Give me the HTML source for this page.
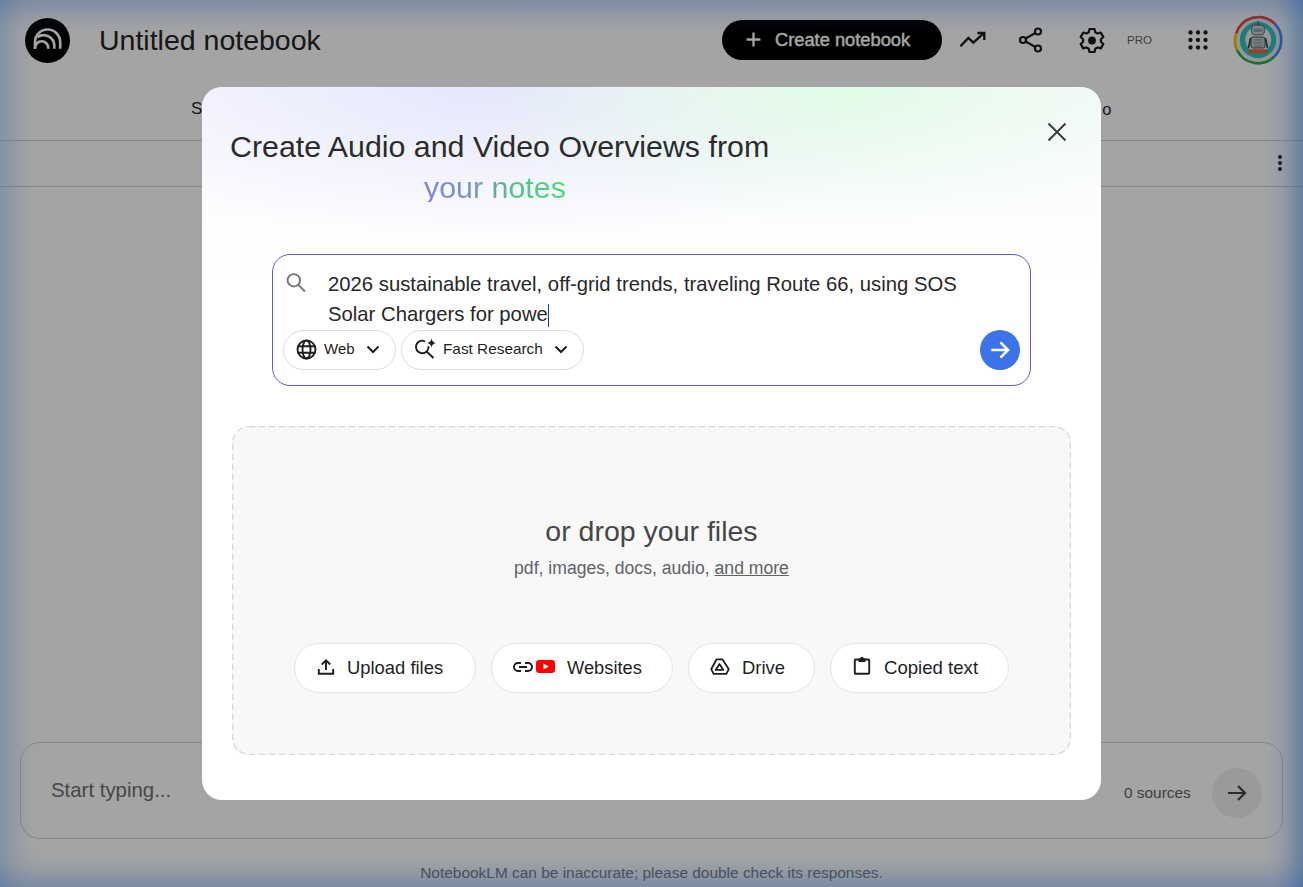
<!DOCTYPE html>
<html><head><meta charset="utf-8">
<style>
*{box-sizing:border-box;margin:0;padding:0}
html,body{width:1303px;height:887px;overflow:hidden;background:#fff;font-family:"Liberation Sans",sans-serif;color:#1f1f1f}
.abs{position:absolute}
.t{position:absolute;white-space:nowrap;line-height:1}
#glow{position:absolute;left:0;top:0;width:1303px;height:887px;
 background:
  linear-gradient(to right, rgba(80,165,255,.3) 0px, rgba(80,165,255,.22) 8px, rgba(80,165,255,.13) 16px, rgba(80,165,255,.06) 24px, rgba(80,165,255,.02) 32px, rgba(80,165,255,0) 40px),
  linear-gradient(to left, rgba(70,140,245,.5) 0px, rgba(70,140,245,.36) 8px, rgba(70,140,245,.2) 16px, rgba(70,140,245,.09) 24px, rgba(70,140,245,.03) 32px, rgba(70,140,245,0) 40px),
  linear-gradient(to bottom, rgba(70,140,245,.32) 0px, rgba(70,140,245,.23) 8px, rgba(70,140,245,.13) 16px, rgba(70,140,245,.05) 24px, rgba(70,140,245,.01) 32px, rgba(70,140,245,0) 38px),
  linear-gradient(to top, rgba(70,140,245,.32) 0px, rgba(70,140,245,.23) 8px, rgba(70,140,245,.13) 16px, rgba(70,140,245,.05) 24px, rgba(70,140,245,.01) 32px, rgba(70,140,245,0) 38px);}
#overlay{position:absolute;left:0;top:0;width:1303px;height:887px;background:rgba(0,0,0,0.356)}
#modal{position:absolute;left:202px;top:87px;width:899px;height:713px;border-radius:20px;background:#fff;overflow:hidden}
#modal .bg{position:absolute;left:0;top:0;width:899px;height:713px;
 background:
  radial-gradient(ellipse 380px 140px at 640px 0px, rgba(226,252,230,1), rgba(226,252,230,0.5) 45%, rgba(226,252,230,0) 100%),
  radial-gradient(ellipse 480px 150px at 300px 0px, rgba(229,230,252,1), rgba(229,230,252,0.5) 45%, rgba(229,230,252,0) 100%),
  linear-gradient(180deg, rgba(240,241,252,0.45) 0px, rgba(255,255,255,0) 190px);}
.chip{position:absolute;border:1px solid #dadce0;border-radius:20px;background:#fff}
.btn{position:absolute;border:1px solid #e3e3e3;border-radius:25px;background:#fff;height:50px;top:643px}
</style></head>
<body>
<!-- header -->
<svg class="abs" style="left:25px;top:18px" width="45" height="45" viewBox="0 0 45 45">
 <circle cx="22.5" cy="22.5" r="22.5" fill="#000"/>
 <g fill="none" stroke="#fff" stroke-width="2.65">
  <path d="M10 30.7 V24.1 A12.6 12.6 0 0 1 35.2 24.1 V30.7"/>
  <path d="M12.5 19.1 A10.7 10.7 0 0 1 29.3 27.9 V30.7"/>
  <path d="M10 30.7 V29.9 A6.65 6.65 0 0 1 23.3 29.9 V30.7"/>
 </g>
</svg>
<div class="t" style="left:99px;top:25.5px;font-size:28.5px;color:#242424">Untitled notebook</div>

<div class="abs" style="left:722px;top:20px;width:220px;height:40px;border-radius:20px;background:#000"></div>
<svg class="abs" style="left:746px;top:32px" width="15" height="15" viewBox="0 0 15 15"><path d="M7.5 0.5V14.5M0.5 7.5H14.5" stroke="#fff" stroke-width="2.3"/></svg>
<div class="t" style="left:775px;top:30.8px;font-size:18.3px;font-weight:400;-webkit-text-stroke:0.45px #fff;color:#fff">Create notebook</div>

<!-- trending -->
<svg class="abs" style="left:958px;top:28px" width="28" height="24" viewBox="0 0 28 24">
 <path d="M2.4 18.3 L10.4 9.9 L15.3 14.6 L25.5 5.3" fill="none" stroke="#1a1a1a" stroke-width="2.3"/>
 <path d="M19.4 5 H26.3 V11.9" fill="none" stroke="#1a1a1a" stroke-width="2.3"/>
</svg>
<!-- share -->
<svg class="abs" style="left:1018px;top:27px" width="26" height="26" viewBox="0 0 26 26">
 <g fill="none" stroke="#1a1a1a" stroke-width="2.2">
  <circle cx="20" cy="4.5" r="3"/><circle cx="5" cy="13" r="3"/><circle cx="20" cy="21.5" r="3"/>
  <path d="M7.6 11.5 L17.4 6 M7.6 14.5 L17.4 20"/>
 </g>
</svg>
<!-- settings -->
<svg class="abs" style="left:1079px;top:27px" width="26" height="26" viewBox="0 0 26 26">
 <path fill="none" stroke="#1a1a1a" stroke-width="2.2" stroke-linejoin="round" d="M10.5 2 H15.5 L16.3 5.2 L18.6 6.5 L21.8 5.6 L24.3 9.9 L21.9 12.2 V14.8 L24.3 17.1 L21.8 21.4 L18.6 20.5 L16.3 21.8 L15.5 25 H10.5 L9.7 21.8 L7.4 20.5 L4.2 21.4 L1.7 17.1 L4.1 14.8 V12.2 L1.7 9.9 L4.2 5.6 L7.4 6.5 L9.7 5.2 Z"/>
 <circle cx="13" cy="13.5" r="3.9" fill="#1a1a1a"/>
</svg>
<div class="t" style="left:1127px;top:34px;font-size:11.6px;color:#5f6368">PRO</div>
<!-- apps -->
<svg class="abs" style="left:1187px;top:29px" width="22" height="22" viewBox="0 0 22 22" fill="#1f1f1f">
 <circle cx="3.5" cy="3.5" r="2.15"/><circle cx="11" cy="3.5" r="2.15"/><circle cx="18.5" cy="3.5" r="2.15"/>
 <circle cx="3.5" cy="11" r="2.15"/><circle cx="11" cy="11" r="2.15"/><circle cx="18.5" cy="11" r="2.15"/>
 <circle cx="3.5" cy="18.5" r="2.15"/><circle cx="11" cy="18.5" r="2.15"/><circle cx="18.5" cy="18.5" r="2.15"/>
</svg>
<!-- avatar -->
<svg class="abs" style="left:1233px;top:15px" width="50" height="50" viewBox="0 0 50 50">
 <g fill="none" stroke-width="2.8">
  <path d="M3.3 18.5 A23.3 23.3 0 0 1 41.5 8.5" stroke="#ea4335"/>
  <path d="M41.5 8.5 A23.3 23.3 0 0 1 41.5 41.3" stroke="#4285f4"/>
  <path d="M41.5 41.3 A23.3 23.3 0 0 1 4 35" stroke="#34a853"/>
  <path d="M4 35 A23.3 23.3 0 0 1 3.3 18.5" stroke="#fbbc04"/>
 </g>
 <circle cx="25" cy="25" r="21.3" fill="#e6e8ea"/>
 <circle cx="25" cy="25" r="18.2" fill="#2bc6b8"/>
 <circle cx="25.3" cy="24.5" r="13" fill="#e8ecee"/>
 <path d="M25 6 V10" stroke="#444" stroke-width="1.2"/>
 <rect x="18.7" y="10.2" width="12.6" height="9.6" rx="3" fill="#c8d0d2" stroke="#5a6264" stroke-width="1"/>
 <rect x="20.5" y="13.5" width="9" height="3.5" rx="1" fill="#8fa4a8"/>
 <rect x="18" y="22" width="14" height="11" rx="2" fill="#b8c4c6" stroke="#4a5254" stroke-width="1"/>
 <path d="M21 25 H29 M21 28 H29 M21 31 H29" stroke="#7a8a8c" stroke-width="0.8"/>
 <path d="M15.5 33 L17.5 23 M34.5 33 L32.5 23" stroke="#3a3a3a" stroke-width="1.6"/>
 <rect x="15.3" y="34.2" width="19" height="4.1" rx="1" fill="#f2603a"/>
</svg>
<!-- tabs -->
<div class="t" style="left:191px;top:100px;font-size:17px;color:#1f1f1f">Sources</div>
<div class="t" style="left:1102.2px;top:100.5px;font-size:16.5px;color:#1f1f1f">o</div>
<div class="abs" style="left:0;top:140px;width:1303px;height:1px;background:#d0d0d0"></div>
<div class="abs" style="left:0;top:186px;width:1303px;height:1px;background:#d0d0d0"></div>
<svg class="abs" style="left:1276px;top:154px" width="8" height="18" viewBox="0 0 8 18" fill="#1f1f1f">
 <circle cx="4" cy="3" r="2"/><circle cx="4" cy="9" r="2"/><circle cx="4" cy="15" r="2"/>
</svg>

<!-- bottom input -->
<div class="abs" style="left:20px;top:742px;width:1263px;height:97px;border:1px solid #d3d3d3;border-radius:20px;background:#fff"></div>
<div class="t" style="left:51px;top:780px;font-size:20.4px;color:#6f6f6f">Start typing...</div>
<div class="t" style="left:1124px;top:785px;font-size:15.4px;color:#5f6368">0 sources</div>
<div class="abs" style="left:1212px;top:768px;width:50px;height:50px;border-radius:25px;background:#f0f0f0"></div>
<svg class="abs" style="left:1226px;top:782px" width="22" height="22" viewBox="0 0 22 22">
 <path d="M2 11 H19 M12 4 L19 11 L12 18" fill="none" stroke="#444746" stroke-width="2.2"/>
</svg>
<div class="t" style="left:0;width:1303px;text-align:center;top:865px;font-size:15.45px;color:#777a7e">NotebookLM can be inaccurate; please double check its responses.</div>

<div id="glow"></div>
<div id="overlay"></div>

<!-- modal -->
<div id="modal">
 <div class="bg"></div>
 <div class="t" style="left:28px;top:45px;font-size:30.35px;color:#2b2b2b">Create Audio and Video Overviews from</div>
 <div class="t" style="left:222px;top:85px;font-size:30.4px;background:linear-gradient(90deg,#7e84e0 0%,#7596cc 30%,#62aaa0 48%,#58bd90 62%,#50cd84 80%,#4adb7c 100%);-webkit-background-clip:text;background-clip:text;color:transparent">your notes</div>
 <svg class="abs" style="left:844px;top:34px" width="22" height="22" viewBox="0 0 22 22"><path d="M2.5 2.5 L19.5 19.5 M19.5 2.5 L2.5 19.5" stroke="#3a3d3b" stroke-width="2"/></svg>
 <!-- search box -->
 <div class="abs" style="left:70px;top:167px;width:759px;height:132px;border:1.3px solid #5763c6;border-radius:18px;background:#fff"></div>
 <svg class="abs" style="left:82px;top:184px" width="24" height="24" viewBox="0 0 24 24"><circle cx="9.8" cy="9.3" r="6.2" fill="none" stroke="#757575" stroke-width="1.9"/><path d="M14.3 13.8 L21 20.5" stroke="#757575" stroke-width="1.9"/></svg>
 <div class="t" style="left:126px;top:187px;font-size:20.3px;color:#282828">2026 sustainable travel, off-grid trends, traveling Route 66, using SOS</div>
 <div class="t" style="left:126px;top:217px;font-size:20.3px;color:#282828">Solar Chargers for powe</div>
 <div class="abs" style="left:346px;top:217px;width:1.3px;height:23px;background:#1a3d8f"></div>
 <div class="chip" style="left:81px;top:243px;width:113px;height:40px"></div>
 <svg class="abs" style="left:94px;top:252px" width="21" height="21" viewBox="0 0 21 21"><g fill="none" stroke="#1f1f1f" stroke-width="1.9"><circle cx="10.5" cy="10.5" r="9"/><ellipse cx="10.5" cy="10.5" rx="4" ry="9"/><path d="M1.5 7.3 H19.5 M1.5 13.7 H19.5"/></g></svg>
 <div class="t" style="left:122px;top:254px;font-size:15px;color:#1f1f1f">Web</div>
 <svg class="abs" style="left:164px;top:258px" width="14" height="9" viewBox="0 0 14 9"><path d="M1.5 1.5 L7 7 L12.5 1.5" fill="none" stroke="#1f1f1f" stroke-width="2"/></svg>
 <div class="chip" style="left:199px;top:243px;width:183px;height:40px"></div>
 <svg class="abs" style="left:212px;top:251px" width="24" height="21" viewBox="0 0 24 21"><g fill="none" stroke="#1f1f1f" stroke-width="1.9"><path d="M14.5 8.2 A6.3 6.3 0 1 1 11 3.3"/><path d="M12 13 L19.5 20"/></g><path d="M17.5 0.5 Q18.2 4.3 22 5 Q18.2 5.7 17.5 9.5 Q16.8 5.7 13 5 Q16.8 4.3 17.5 0.5Z" fill="#1f1f1f"/></svg>
 <div class="t" style="left:241px;top:254px;font-size:15.35px;color:#1f1f1f">Fast Research</div>
 <svg class="abs" style="left:352px;top:258px" width="14" height="9" viewBox="0 0 14 9"><path d="M1.5 1.5 L7 7 L12.5 1.5" fill="none" stroke="#1f1f1f" stroke-width="2"/></svg>
 <div class="abs" style="left:778px;top:243px;width:40px;height:40px;border-radius:20px;background:#3b74e9"></div>
 <svg class="abs" style="left:788px;top:253px" width="20" height="20" viewBox="0 0 20 20"><path d="M1.3 10 H18.1 M10.4 2.4 L18.1 10 L10.4 17.6" fill="none" stroke="#fff" stroke-width="2.5"/></svg>
 <!-- dropzone -->
 <div class="abs" style="left:30px;top:339px;width:839px;height:329px;border-radius:16px;background:#f8f8f8"></div>
 <svg class="abs" style="left:30px;top:339px" width="839" height="329"><rect x="0.7" y="0.7" width="837.6" height="327.6" rx="16" fill="none" stroke="#d8d8e0" stroke-width="1.3" stroke-dasharray="6.5 3.5"/></svg>
 <div class="t" style="left:0;width:899px;text-align:center;top:430px;font-size:28.5px;color:#444746">or drop your files</div>
 <div class="t" style="left:0;width:899px;text-align:center;top:472.5px;font-size:17.6px;color:#5f6368">pdf, images, docs, audio, <span style="text-decoration:underline">and more</span></div>
 <div class="btn" style="left:92px;width:182px;top:556px"></div>
 <svg class="abs" style="left:115px;top:571px" width="18" height="18" viewBox="0 0 18 18"><g fill="none" stroke="#1f1f1f" stroke-width="1.9"><path d="M9 12 V2.5 M4.8 6.5 L9 2.3 L13.2 6.5"/><path d="M1.8 11 V15.8 H16.2 V11"/></g></svg>
 <div class="t" style="left:145px;top:572px;font-size:18.4px;color:#1f1f1f">Upload files</div>
 <div class="btn" style="left:289px;width:182px;top:556px"></div>
 <svg class="abs" style="left:311px;top:574px" width="20" height="12" viewBox="0 0 20 12"><g fill="none" stroke="#1f1f1f" stroke-width="1.9"><path d="M8 2 H5 A4 4 0 0 0 5 10 H8 M12 2 H15 A4 4 0 0 1 15 10 H12 M6 6 H14"/></g></svg>
 <svg class="abs" style="left:334px;top:573px" width="19" height="13" viewBox="0 0 19 13"><rect x="0" y="0" width="19" height="13" rx="3.2" fill="#ff0000"/><path d="M7.5 3.6 L12.8 6.5 L7.5 9.4Z" fill="#fff"/></svg>
 <div class="t" style="left:365px;top:572px;font-size:18.3px;color:#1f1f1f">Websites</div>
 <div class="btn" style="left:486px;width:127px;top:556px"></div>
 <svg class="abs" style="left:507px;top:570px" width="22" height="20" viewBox="0 0 22 20"><g fill="none" stroke="#1f1f1f" stroke-width="1.8" stroke-linejoin="round"><path d="M7.6 2.3 H13.4 L19.8 12.2 L17.4 16.9 H4.6 L2.2 12.2 Z"/><path d="M10.5 6.9 L14.3 12.9 H6.7 Z"/></g></svg>
 <div class="t" style="left:540px;top:572px;font-size:18.4px;color:#1f1f1f">Drive</div>
 <div class="btn" style="left:628px;width:179px;top:556px"></div>
 <svg class="abs" style="left:651px;top:569px" width="18" height="19" viewBox="0 0 18 19"><g fill="none" stroke="#1f1f1f" stroke-width="1.9"><rect x="1.8" y="3.5" width="14.4" height="14.2" rx="0.8"/></g><path d="M5.5 2.5 H7.2 A1.8 1.8 0 0 1 10.8 2.5 H12.5 V6 H5.5 Z" fill="#1f1f1f"/></svg>
 <div class="t" style="left:682px;top:572px;font-size:18.6px;color:#1f1f1f">Copied text</div>
</div>
</body></html>
